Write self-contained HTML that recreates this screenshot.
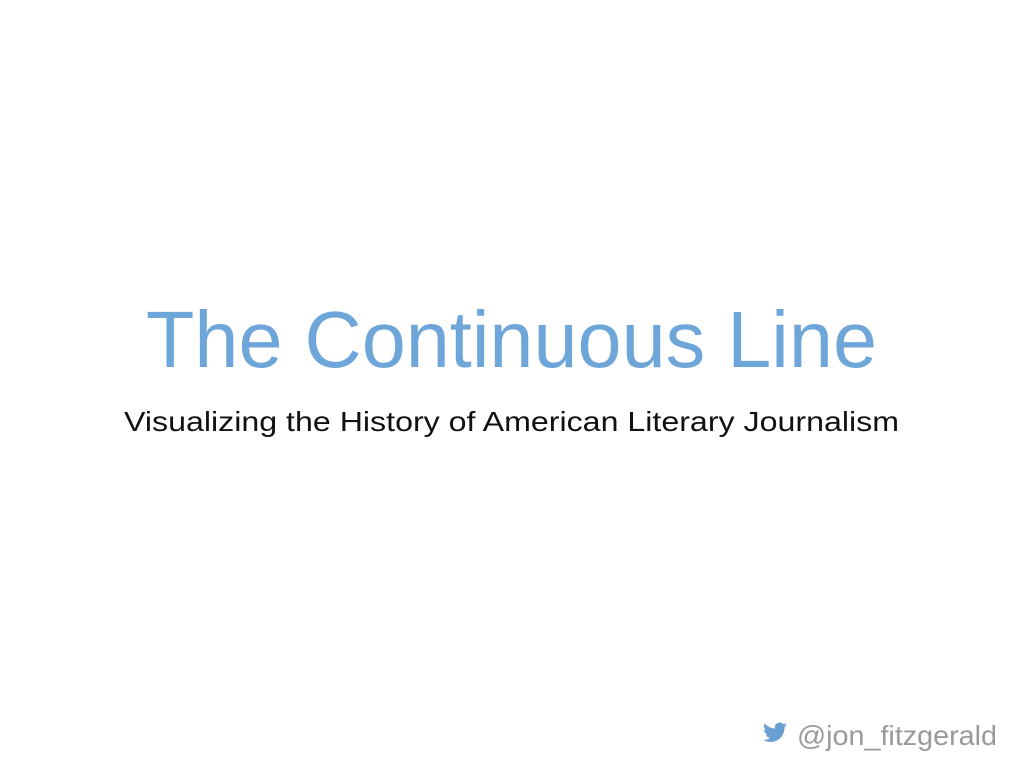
<!DOCTYPE html>
<html><head><meta charset="utf-8"><style>
html,body{margin:0;padding:0;background:#fff;width:1024px;height:768px;overflow:hidden}
</style></head><body>
<svg width="1024" height="768" viewBox="0 0 1024 768" xmlns="http://www.w3.org/2000/svg" style="display:block">
<text x="146" y="367" font-family="Liberation Sans, sans-serif" font-size="80" fill="#6fa6da" textLength="731" lengthAdjust="spacingAndGlyphs">The Continuous Line</text>
<text x="124" y="431" font-family="Liberation Sans, sans-serif" font-size="28" fill="#111" textLength="775" lengthAdjust="spacingAndGlyphs">Visualizing the History of American Literary Journalism</text>
<text x="797" y="745" font-family="Liberation Sans, sans-serif" font-size="28" fill="#9a9a9a" textLength="200" lengthAdjust="spacingAndGlyphs">@jon_fitzgerald</text>
<g transform="translate(763,722) scale(1)" fill="#6a9fd4">
<path d="M24 2.8c-.9.4-1.8.7-2.8.8 1-.6 1.8-1.6 2.2-2.7-1 .6-2 1-3.1 1.2C19.4 1.1 18.1.5 16.7.5c-2.7 0-4.9 2.2-4.9 4.9 0 .4 0 .8.1 1.1C7.8 6.3 4.2 4.4 1.7 1.4c-.4.7-.7 1.6-.7 2.5 0 1.7.9 3.2 2.2 4.1-.8 0-1.6-.2-2.2-.6v.1c0 2.4 1.7 4.4 3.9 4.8-.4.1-.8.2-1.3.2-.3 0-.6 0-.9-.1.6 2 2.4 3.4 4.6 3.4-1.7 1.3-3.8 2.1-6.1 2.1-.4 0-.8 0-1.2-.1 2.2 1.4 4.8 2.2 7.5 2.2 9.1 0 14-7.5 14-14v-.6c1-.7 1.8-1.6 2.4-2.6z"/>
</g>
</svg>
</body></html>
